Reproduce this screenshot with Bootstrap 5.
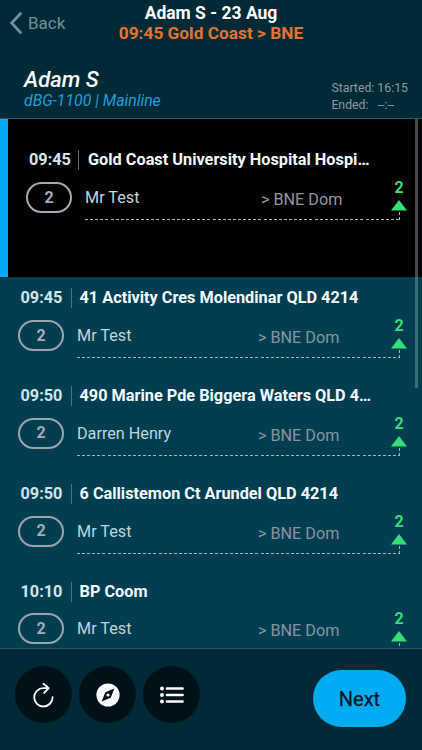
<!DOCTYPE html>
<html lang="en">
<head>
<meta charset="utf-8">
<meta name="viewport" content="width=device-width, initial-scale=1">
<title>Adam S - 23 Aug</title>
<link href="https://cdn.jsdelivr.net/npm/bootstrap@5.3.0/dist/css/bootstrap.min.css" rel="stylesheet">
<style>
body{font-family:Roboto,"Liberation Sans",sans-serif;background:#002a36;color:#fff;font-size:16px;line-height:20px}
.screen{height:750px}
.top-area{height:118px;background:#002a36}
.nav-line{height:48px}
.back-link{width:110px;padding:10px 0 0 10px;color:#6f939e;gap:6px;font-size:17px;height:36px}
.heading{font-size:17.5px;font-weight:700;padding-top:3px;width:202px}
.route{color:#e6742f;font-size:17.3px;font-weight:700}
.driver{font-size:22px;line-height:24px;font-style:italic;font-weight:500;padding:20px 0 0 24px}
.driver small{display:block;font-size:15.8px;line-height:18px;font-weight:400;color:#1d9fdb}
.shift{font-size:12.3px;line-height:16.5px;color:#8b9ba5;padding:32px 14px 0 0;white-space:pre}
.trips{height:530px;background:#013e51;border-top:1px solid #2b5968}
.stop{height:97.75px;padding-top:11.4px}
.stop.current{height:158px;background:#000;border-left:8px solid #02acf2;padding-top:31px}
.line-one{height:20px;padding-left:20.5px;font-weight:700}
.time{width:51px;color:#cfe6ed;font-size:16.3px;border-right:1px solid #4f7581}
.place{padding-left:8px;font-size:16.3px;color:#f3fbff;white-space:nowrap}
.line-two{margin-top:11.7px;height:41px;padding:0 22px 0 18px}
.pill{width:46px;height:31px;border:2px solid #9aa5ae;border-radius:16px;color:#a3adb5;font-weight:700}
.leg{margin-left:13px;height:38px;flex:1;background:repeating-linear-gradient(90deg,#a9b7be 0 3px,transparent 3px 5.1px) left bottom/100% 1px no-repeat,repeating-linear-gradient(0deg,#a9b7be 0 3px,transparent 3px 5px) right bottom/1px 10px no-repeat}
.name{width:181px;padding-top:6px;color:#bcd7df;font-size:16.2px}
.dest{color:#8796a1;padding-top:8px;flex:1;font-size:16.2px}
.count{width:16px;margin-right:-7px;color:#35df78;font-weight:700;line-height:11px}
.count svg{display:block}
.count span{height:18px}
.current .line-one{padding-left:21px}
.current .line-two{margin-top:12px}
.current .time{width:50px}
.current .place{padding-left:9px}
.current .name{width:176px}
.current .pill{border-color:#aaa5b0}
.current .dest{color:#96939c}
.thumb{position:absolute;right:4px;top:0;width:3px;height:269px;background:rgba(130,150,160,.5)}
.bottom-area{height:102px;background:#002a36;border-top:1px solid #2b5968;padding:17px 16px 0 15px}
.tools{gap:7px}
.tool,.tool:hover{width:57px;height:57px;border-radius:50%;background:#001219;color:#fff;padding:0;border:0}
.next-btn{width:93px;height:57px;border-radius:29px;background:#02acf2;color:#001a26;font-size:20px;font-weight:400;-webkit-text-stroke:.25px #001a26;border:0;margin-top:4px}
</style>
</head>
<body>
<div class="screen d-flex flex-column overflow-hidden">
<header class="top-area">
<div class="nav-line d-flex">
<a class="back-link d-flex align-items-center text-decoration-none" href="#"><svg width="12" height="22" viewBox="0 0 12 22" fill="none" stroke="currentColor" stroke-width="2.7" stroke-linecap="round"><path d="M10.5 1.5 1.7 11l8.8 9.5"/></svg><span>Back</span></a>
<div class="heading text-center"><div class="text-nowrap">Adam S - 23 Aug</div><div class="route text-nowrap">09:45 Gold Coast &gt; BNE</div></div>
</div>
<div class="d-flex justify-content-between">
<div class="driver"><span>Adam S</span><small>dBG-1100 | Mainline</small></div>
<div class="shift">Started: 16:15
Ended:   --:--</div>
</div>
</header>
<main class="trips position-relative overflow-hidden">
<section class="stop current"><div class="line-one d-flex"><div class="time">09:45</div><div class="place">Gold Coast University Hospital Hospi…</div></div><div class="line-two d-flex"><div class="pill d-flex align-items-center justify-content-center">2</div><div class="leg d-flex"><div class="name">Mr Test</div><div class="dest">&gt; BNE Dom</div><div class="count text-center"><span class="d-block">2</span><svg width="16" height="11"><path d="M8 0 16 10.5H0z" fill="#35df78"/></svg></div></div></div></section>
<section class="stop"><div class="line-one d-flex"><div class="time">09:45</div><div class="place">41 Activity Cres Molendinar QLD 4214</div></div><div class="line-two d-flex"><div class="pill d-flex align-items-center justify-content-center">2</div><div class="leg d-flex"><div class="name">Mr Test</div><div class="dest">&gt; BNE Dom</div><div class="count text-center"><span class="d-block">2</span><svg width="16" height="11"><path d="M8 0 16 10.5H0z" fill="#35df78"/></svg></div></div></div></section>
<section class="stop"><div class="line-one d-flex"><div class="time">09:50</div><div class="place">490 Marine Pde Biggera Waters QLD 4…</div></div><div class="line-two d-flex"><div class="pill d-flex align-items-center justify-content-center">2</div><div class="leg d-flex"><div class="name">Darren Henry</div><div class="dest">&gt; BNE Dom</div><div class="count text-center"><span class="d-block">2</span><svg width="16" height="11"><path d="M8 0 16 10.5H0z" fill="#35df78"/></svg></div></div></div></section>
<section class="stop"><div class="line-one d-flex"><div class="time">09:50</div><div class="place">6 Callistemon Ct Arundel QLD 4214</div></div><div class="line-two d-flex"><div class="pill d-flex align-items-center justify-content-center">2</div><div class="leg d-flex"><div class="name">Mr Test</div><div class="dest">&gt; BNE Dom</div><div class="count text-center"><span class="d-block">2</span><svg width="16" height="11"><path d="M8 0 16 10.5H0z" fill="#35df78"/></svg></div></div></div></section>
<section class="stop"><div class="line-one d-flex"><div class="time">10:10</div><div class="place">BP Coom</div></div><div class="line-two d-flex"><div class="pill d-flex align-items-center justify-content-center">2</div><div class="leg d-flex"><div class="name">Mr Test</div><div class="dest">&gt; BNE Dom</div><div class="count text-center"><span class="d-block">2</span><svg width="16" height="11"><path d="M8 0 16 10.5H0z" fill="#35df78"/></svg></div></div></div></section>
<div class="thumb"></div>
</main>
<footer class="bottom-area d-flex justify-content-between align-items-start">
<div class="tools d-flex">
<button class="tool btn d-flex align-items-center justify-content-center" aria-label="Refresh"><svg width="24" height="28" viewBox="0 0 24 28" fill="none" stroke="#fff" stroke-width="1.8" stroke-linecap="round" stroke-linejoin="round"><path d="M20.6 16.2a9.2 9.2 0 1 1-9.2-9.1H16.5M11.5 2.8 16.7 7.1l-4.6 4.8"/></svg></button>
<button class="tool btn d-flex align-items-center justify-content-center" aria-label="Navigate"><svg width="24" height="24" viewBox="0 0 24 24"><circle cx="12" cy="12" r="11.6" fill="#fff"/><path d="M18.4 5.6 14.7 14.7 5.6 18.4 9.3 9.3z" fill="#001219"/><circle cx="12" cy="12" r="1.6" fill="#fff"/></svg></button>
<button class="tool btn d-flex align-items-center justify-content-center" aria-label="List"><svg width="24" height="18" viewBox="0 0 24 18" fill="#fff" stroke="#fff" stroke-linecap="round"><path d="M7 2.5h15.5M7 9h15.5M7 15.5h15.5" stroke-width="2.7"/><g stroke="none"><circle cx="2" cy="2.5" r="2"/><circle cx="2" cy="9" r="2"/><circle cx="2" cy="15.5" r="2"/></g></svg></button>
</div>
<button class="next-btn btn">Next</button>
</footer>
</div>
<script src="https://cdn.jsdelivr.net/npm/bootstrap@5.3.0/dist/js/bootstrap.bundle.min.js"></script>
</body>
</html>
